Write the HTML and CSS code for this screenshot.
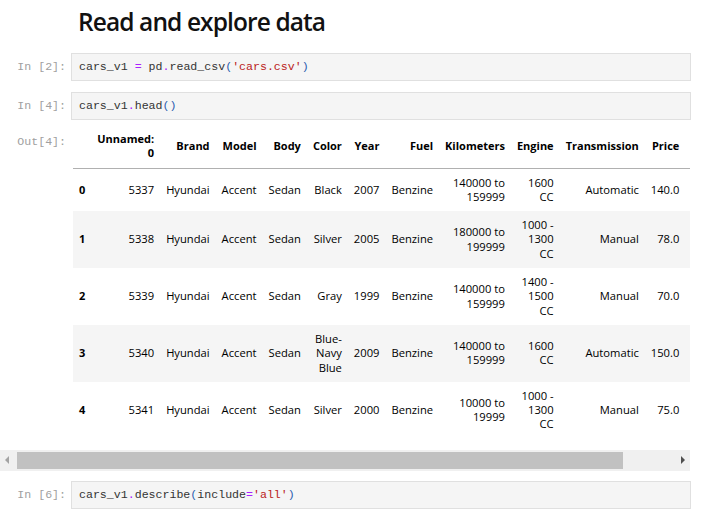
FILE: index.html
```html
<!DOCTYPE html>
<html>
<head>
<meta charset="utf-8">
<link rel="stylesheet" href="styles.css">
</head>
<body>
<div class="nb">
  <div class="md-row">
    <h1 class="title">Read and explore data</h1>
  </div>

  <div class="cell">
    <div class="prompt">In [2]:</div>
    <div class="input"><span class="v">cars_v1</span> <span class="op">=</span> pd<span class="op">.</span>read_csv<span class="br">(</span><span class="str">'cars.csv'</span><span class="br">)</span></div>
  </div>

  <div class="cell">
    <div class="prompt">In [4]:</div>
    <div class="input">cars_v1<span class="op">.</span>head<span class="br">()</span></div>
  </div>

  <div class="out-clip">
    <div class="out-row">
      <div class="prompt out">Out[4]:</div>
      <div class="out-area">
        <table class="df">
          <thead>
            <tr>
              <th class="idx"></th>
              <th>Unnamed:<br>0</th>
              <th>Brand</th>
              <th>Model</th>
              <th>Body</th>
              <th>Color</th>
              <th>Year</th>
              <th>Fuel</th>
              <th>Kilometers</th>
              <th>Engine</th>
              <th>Transmission</th>
              <th class="last">Price</th>
            </tr>
          </thead>
          <tbody>
            <tr>
              <th class="idx">0</th>
              <td>5337</td><td>Hyundai</td><td>Accent</td><td>Sedan</td><td>Black</td><td>2007</td><td>Benzine</td>
              <td>140000 to<br>159999</td><td>1600<br>CC</td><td>Automatic</td><td class="last">140.0</td>
            </tr>
            <tr>
              <th class="idx">1</th>
              <td>5338</td><td>Hyundai</td><td>Accent</td><td>Sedan</td><td>Silver</td><td>2005</td><td>Benzine</td>
              <td>180000 to<br>199999</td><td>1000 -<br>1300<br>CC</td><td>Manual</td><td class="last">78.0</td>
            </tr>
            <tr>
              <th class="idx">2</th>
              <td>5339</td><td>Hyundai</td><td>Accent</td><td>Sedan</td><td>Gray</td><td>1999</td><td>Benzine</td>
              <td>140000 to<br>159999</td><td>1400 -<br>1500<br>CC</td><td>Manual</td><td class="last">70.0</td>
            </tr>
            <tr>
              <th class="idx">3</th>
              <td>5340</td><td>Hyundai</td><td>Accent</td><td>Sedan</td><td>Blue-<br>Navy<br>Blue</td><td>2009</td><td>Benzine</td>
              <td>140000 to<br>159999</td><td>1600<br>CC</td><td>Automatic</td><td class="last">150.0</td>
            </tr>
            <tr>
              <th class="idx">4</th>
              <td>5341</td><td>Hyundai</td><td>Accent</td><td>Sedan</td><td>Silver</td><td>2000</td><td>Benzine</td>
              <td>10000 to<br>19999</td><td>1000 -<br>1300<br>CC</td><td>Manual</td><td class="last">75.0</td>
            </tr>
          </tbody>
        </table>
      </div>
    </div>
  </div>

  <div class="hscroll">
    <div class="arrow left"><svg width="6" height="8" viewBox="0 0 6 8"><path d="M5 0 L1 4 L5 8 Z" fill="#a3a3a3"/></svg></div>
    <div class="track"><div class="thumb"></div></div>
    <div class="arrow right"><svg width="6" height="8" viewBox="0 0 6 8"><path d="M1 0 L5 4 L1 8 Z" fill="#505050"/></svg></div>
  </div>

  <div class="cell">
    <div class="prompt">In [6]:</div>
    <div class="input">cars_v1<span class="op">.</span>describe<span class="br">(</span>include<span class="op">=</span><span class="str">'all'</span><span class="br">)</span></div>
  </div>
</div>
</body>
</html>
```

FILE: styles.css
```css
html, body {
  margin: 0;
  padding: 0;
  background: #ffffff;
}

.nb {
  width: 722px;
  overflow: hidden;
}

.md-row {
  padding-left: 78px;
  padding-top: 7px;
  margin-bottom: 16px;
}

.title {
  margin: 0;
  font-family: "Open Sans", "Noto Sans", sans-serif;
  font-weight: 600;
  font-size: 24.5px;
  letter-spacing: -0.9px;
  line-height: 30px;
  color: #111111;
}

.cell {
  display: flex;
  align-items: flex-start;
  margin-bottom: 11px;
}

.prompt {
  width: 71px;
  flex: 0 0 71px;
  box-sizing: border-box;
  padding-right: 5px;
  text-align: right;
  font-family: "Liberation Mono", "DejaVu Sans Mono", monospace;
  font-size: 11.6px;
  line-height: 14px;
  color: #a0a0a0;
  padding-top: 7px;
}

.input {
  width: 620px;
  box-sizing: border-box;
  border: 1px solid #e0e0e0;
  background: #f5f5f5;
  padding: 6px 7px;
  font-family: "Liberation Mono", "DejaVu Sans Mono", monospace;
  font-size: 11.6px;
  line-height: 14px;
  color: #333333;
  white-space: pre;
}

.op { color: #aa22ff; }
.str { color: #ba2121; }
.br { color: #2a5db0; }

.out-clip {
  width: 690px;
  overflow: hidden;
  margin-top: -6px;
}

.out-row {
  display: flex;
  align-items: flex-start;
}

.prompt.out {
  padding-top: 10px;
}

.out-area {
  margin-left: 2px;
}

.df {
  border-collapse: collapse;
  border-spacing: 0;
  font-family: "Open Sans", "Noto Sans", sans-serif;
  font-size: 11.2px;
  line-height: 14.3px;
  color: #000000;
}

.df th, .df td {
  padding: 7px 6px;
  text-align: right;
  vertical-align: middle;
  white-space: nowrap;
}

.df th {
  font-weight: bold;
  font-size: 11px;
}

.df thead tr {
  border-bottom: 1px solid #b0b0b0;
}

.df tbody tr:nth-child(odd) {
  background: #ffffff;
}

.df tbody tr:nth-child(even) {
  background: #f5f5f5;
}

.df th.idx {
  text-align: left;
}

.df .last {
  padding-right: 80px;
}

.hscroll {
  width: 690px;
  height: 21px;
  margin-top: 11px;
  margin-bottom: 10px;
  background: #f0f0f0;
  display: flex;
  align-items: center;
}

.arrow {
  width: 14px;
  height: 21px;
  display: flex;
  align-items: center;
  justify-content: center;
  flex: 0 0 auto;
}

.track {
  flex: 1;
  height: 21px;
  display: flex;
  align-items: center;
  padding-left: 3px;
}

.thumb {
  width: 606px;
  height: 17px;
  background: #c1c1c1;
}
```
